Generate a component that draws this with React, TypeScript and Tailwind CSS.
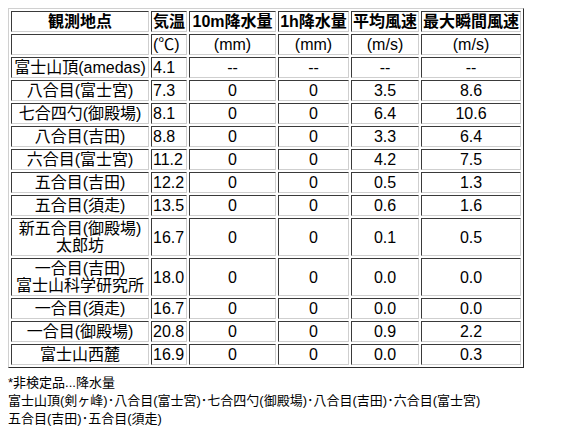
const rows: [string[], string, string, string, string, string][] = [
  [["富士山頂(amedas)"], "4.1", "--", "--", "--", "--"],
  [["八合目(富士宮)"], "7.3", "0", "0", "3.5", "8.6"],
  [["七合四勺(御殿場)"], "8.1", "0", "0", "6.4", "10.6"],
  [["八合目(吉田)"], "8.8", "0", "0", "3.3", "6.4"],
  [["六合目(富士宮)"], "11.2", "0", "0", "4.2", "7.5"],
  [["五合目(吉田)"], "12.2", "0", "0", "0.5", "1.3"],
  [["五合目(須走)"], "13.5", "0", "0", "0.6", "1.6"],
  [["新五合目(御殿場)", "太郎坊"], "16.7", "0", "0", "0.1", "0.5"],
  [["一合目(吉田)", "富士山科学研究所"], "18.0", "0", "0", "0.0", "0.0"],
  [["一合目(須走)"], "16.7", "0", "0", "0.0", "0.0"],
  [["一合目(御殿場)"], "20.8", "0", "0", "0.9", "2.2"],
  [["富士山西麓"], "16.9", "0", "0", "0.0", "0.3"],
];

const cell =
  "border border-t-[#3a3a3a] border-l-[#3a3a3a] border-b-[#cfcfcf] border-r-[#cfcfcf] p-px align-middle";

export default function App() {
  return (
    <div
      className="p-2 text-black bg-white min-h-[430px]"
      style={{ fontFamily: '"Liberation Sans", "Noto Sans CJK JP", sans-serif' }}
    >
      <table className="table-fixed w-[516px] border-separate border-spacing-[2px] border border-t-[#d0d0d0] border-l-[#d0d0d0] border-b-[#2a2a2a] border-r-[#2a2a2a] text-[16px] leading-[17px]">
        <thead>
          <tr className="font-bold">
            <th className={`${cell} w-[138px] text-center`}>観測地点</th>
            <th className={`${cell} w-[36px] text-center`}>気温</th>
            <th className={`${cell} w-[87px] text-center`}>10m降水量</th>
            <th className={`${cell} w-[71px] text-center`}>1h降水量</th>
            <th className={`${cell} w-[68px] text-center`}>平均風速</th>
            <th className={`${cell} w-[100px] text-center`}>最大瞬間風速</th>
          </tr>
        </thead>
        <tbody>
          <tr>
            <td className={cell}></td>
            <td className={`${cell} text-left`}>(℃)</td>
            <td className={`${cell} text-center`}>(mm)</td>
            <td className={`${cell} text-center`}>(mm)</td>
            <td className={`${cell} text-center`}>(m/s)</td>
            <td className={`${cell} text-center`}>(m/s)</td>
          </tr>
          {rows.map(([name, temp, r10, r1h, avg, max]) => (
            <tr key={name.join("")}>
              <td className={`${cell} text-center`}>
                {name.map((n) => (
                  <div key={n}>{n}</div>
                ))}
              </td>
              <td className={`${cell} text-left`}>{temp}</td>
              <td className={`${cell} text-center`}>{r10}</td>
              <td className={`${cell} text-center`}>{r1h}</td>
              <td className={`${cell} text-center`}>{avg}</td>
              <td className={`${cell} text-center`}>{max}</td>
            </tr>
          ))}
        </tbody>
      </table>

      <div className="mt-[6px] text-[13px] leading-[18px]">
        <div>*非検定品...降水量</div>
        <div>富士山頂(剣ヶ峰)･八合目(富士宮)･七合四勺(御殿場)･八合目(吉田)･六合目(富士宮)</div>
        <div>五合目(吉田)･五合目(須走)</div>
      </div>
    </div>
  );
}
